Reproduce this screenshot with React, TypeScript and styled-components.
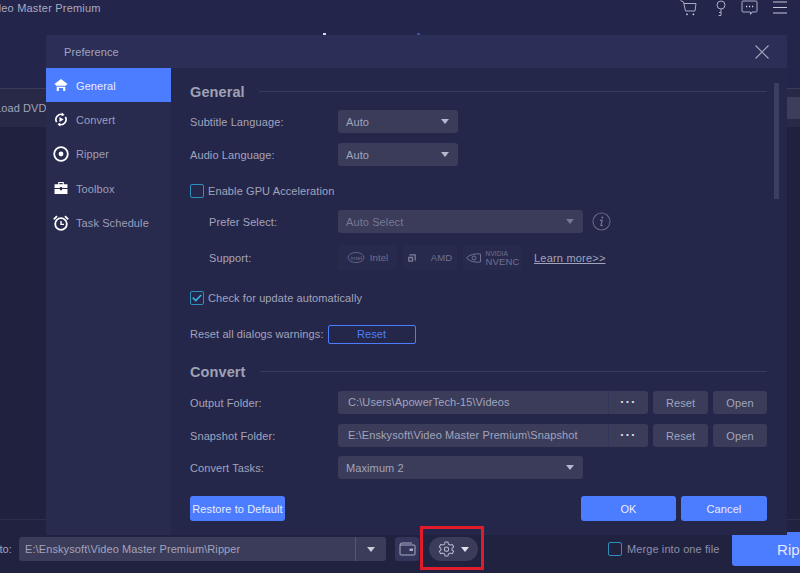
import styled, { createGlobalStyle } from 'styled-components';
import type { ReactNode } from 'react';

const Global = createGlobalStyle`
  html, body { margin: 0; padding: 0; background: #20223f; }
  * { box-sizing: border-box; }
  body { font-family: "Liberation Sans", Arial, sans-serif; }
`;

const navItems: { label: string; icon: ReactNode; active?: boolean }[] = [
  {
    label: 'General',
    active: true,
    icon: (
      <svg width="14" height="12" viewBox="0 0 16 14" fill="#fff">
        <path d="M8 0 L16 6 L14 6.6 L14 8 L2 8 L2 6.6 L0 6 Z" />
        <path d="M3 9 H13 V14 H10.5 V10.5 H5.5 V14 H3 Z" />
      </svg>
    ),
  },
  {
    label: 'Convert',
    icon: (
      <svg width="14" height="15" viewBox="0 0 16 16" fill="none" stroke="#fff" strokeWidth="1.9">
        <path d="M3 11 A6 6 0 0 1 10 2.3" />
        <path d="M13 5 A6 6 0 0 1 6 13.7" />
        <path d="M9 0 L12.2 2.8 L8.6 4.2 Z" fill="#fff" stroke="none" />
        <path d="M7 16 L3.8 13.2 L7.4 11.8 Z" fill="#fff" stroke="none" />
        <path d="M6.2 5.2 L11 8 L6.2 10.8 Z" fill="#fff" stroke="none" />
      </svg>
    ),
  },
  {
    label: 'Ripper',
    icon: (
      <svg width="16" height="16" viewBox="0 0 16 16" fill="none">
        <circle cx="8" cy="8" r="6.8" stroke="#fff" strokeWidth="1.8" />
        <circle cx="8" cy="8" r="2.4" fill="#fff" />
      </svg>
    ),
  },
  {
    label: 'Toolbox',
    icon: (
      <svg width="14" height="12" viewBox="0 0 14 13" fill="#fff">
        <path d="M4 0 H10 V2.5 H14 V6.4 H8.2 V5.4 H5.8 V6.4 H0 V2.5 H4 Z M5.2 1.2 V2.5 H8.8 V1.2 Z" fillRule="evenodd" />
        <path d="M0 7.6 H5.8 V9 H8.2 V7.6 H14 V13 H0 Z" />
      </svg>
    ),
  },
  {
    label: 'Task Schedule',
    icon: (
      <svg width="16" height="16" viewBox="0 0 16 16" fill="none" stroke="#fff">
        <circle cx="8" cy="9" r="5.8" strokeWidth="1.8" />
        <path d="M8 6 V9.4 H11" strokeWidth="1.4" />
        <path d="M0.8 4.4 L4 1.2" strokeWidth="1.8" />
        <path d="M15.2 4.4 L12 1.2" strokeWidth="1.8" />
      </svg>
    ),
  },
];

const App = () => (
  <Page>
    <Global />
    <TopBar>
      <AppTitle>Video Master Premium</AppTitle>
      <TabPeek $left={323} $color="#d8d9e6" />
      <TabPeek $left={417} $color="#3a4fa8" />
      <TopIcons>
        <svg width="17" height="16" viewBox="0 0 17 16" fill="none" stroke="#a9abc4" strokeWidth="1">
          <path d="M0.5 0.5 L3.5 2 L5.5 11 H15 L16 3.5 H4" />
          <circle cx="7" cy="14.3" r="0.9" fill="#d5d6e4" stroke="none" />
          <circle cx="13.4" cy="14.3" r="0.9" fill="#d5d6e4" stroke="none" />
        </svg>
        <svg width="10" height="16" viewBox="0 0 10 16" fill="none" stroke="#a9abc4" strokeWidth="1">
          <circle cx="5" cy="5" r="4" />
          <path d="M5 9 V15.5 H2.5 M5 12.5 H3" />
        </svg>
        <svg width="17" height="16" viewBox="0 0 17 16" fill="none" stroke="#a9abc4" strokeWidth="1">
          <path d="M2 1 H15 Q16 1 16 2 V11 Q16 12 15 12 H11 L9.5 14.5 V12 H2 Q1 12 1 11 V2 Q1 1 2 1 Z" />
          <path d="M5 6.5 H6.2 M8 6.5 H9.2 M11 6.5 H12.2" strokeWidth="1.3" stroke="#d5d6e4" />
        </svg>
        <svg width="14" height="13" viewBox="0 0 14 13" fill="none" stroke="#c5c6d8" strokeWidth="1">
          <path d="M0 1 H14 M0 6.5 H14 M0 12 H14" />
        </svg>
      </TopIcons>
    </TopBar>
    <Toolbar>
      <LoadLabel>Load DVD</LoadLabel>
      <ToolbarStrip />
    </Toolbar>
    <MainArea />
    <BottomBar>
      <SaveLabel>Save to:</SaveLabel>
      <PathField>
        <PathText>E:\Enskysoft\Video Master Premium\Ripper</PathText>
        <PathArrow>
          <Caret $color="#c9cada" />
        </PathArrow>
      </PathField>
      <FolderButton>
        <svg width="17" height="14" viewBox="0 0 17 14" fill="none" stroke="#a9abc4" strokeWidth="1">
          <path d="M1 3 V12 Q1 13 2 13 H15 Q16 13 16 12 V4 Q16 3 15 3 H1 Q1 1 3 1 H13" />
          <rect x="10.5" y="6.5" width="3.5" height="2.5" fill="#a9abc4" stroke="none" />
        </svg>
      </FolderButton>
      <GearPill>
        <svg width="17" height="18" viewBox="0 0 24 24" fill="none" stroke="#b4b5cb" strokeWidth="1.5" strokeLinejoin="round">
          <path d="M10 2 H14 L14.7 5.2 L17 6.5 L20.2 5.5 L22.2 9 L19.8 11 V13.4 L22.2 15.3 L20.2 18.8 L17 17.8 L14.7 19.1 L14 22 H10 L9.3 19.1 L7 17.8 L3.8 18.8 L1.8 15.3 L4.2 13.4 V11 L1.8 9 L3.8 5.5 L7 6.5 L9.3 5.2 Z" />
          <circle cx="12" cy="12.2" r="3" />
        </svg>
        <Caret $color="#e0e1ec" />
      </GearPill>
      <MergeBox>
        <CheckBox />
        <MergeText>Merge into one file</MergeText>
      </MergeBox>
      <RipButton>Rip All</RipButton>
    </BottomBar>

    <Dialog>
      <DialogHeader>
        <DialogTitle>Preference</DialogTitle>
        <svg width="14" height="14" viewBox="0 0 14 14" stroke="#a4a6c0" strokeWidth="1.1">
          <path d="M0.5 0.5 L13.5 13.5 M13.5 0.5 L0.5 13.5" />
        </svg>
      </DialogHeader>
      <DialogBody>
        <Sidebar>
          {navItems.map(({ label, icon, active }) => (
            <NavItem key={label} $active={active}>
              <NavIcon>{icon}</NavIcon>
              <NavLabel>{label}</NavLabel>
            </NavItem>
          ))}
        </Sidebar>
        <Content>
          <SectionTitle>
            <span>General</span>
          </SectionTitle>
          <FormRow $top={9}>
            <FieldLabel>Subtitle Language:</FieldLabel>
            <Select $width={120}>
              Auto
              <Caret />
            </Select>
          </FormRow>
          <FormRow $top={10}>
            <FieldLabel>Audio Language:</FieldLabel>
            <Select $width={120}>
              Auto
              <Caret />
            </Select>
          </FormRow>
          <CheckRow $top={18}>
            <CheckBox />
            Enable GPU Acceleration
          </CheckRow>
          <FormRow $top={12}>
            <SubLabel>Prefer Select:</SubLabel>
            <Select $width={245} $disabled>
              Auto Select
              <Caret $color="#777992" />
            </Select>
            <InfoIcon>
              <svg width="19" height="19" viewBox="0 0 19 19" fill="none">
                <circle cx="9.5" cy="9.5" r="8.5" stroke="#62647f" strokeWidth="1.1" />
                <circle cx="10.3" cy="5.4" r="1" fill="#77799a" />
                <path d="M8 8.4 H10.2 L9 13.2 Q8.9 14.2 10.6 13.2" stroke="#77799a" strokeWidth="1.1" />
              </svg>
            </InfoIcon>
          </FormRow>
          <SupportRow>
            <SubLabel>Support:</SubLabel>
            <Chips>
              <Chip $width={59}>
                <svg width="18" height="13" viewBox="0 0 18 13" fill="none" stroke="#6f7190" strokeWidth="0.8">
                  <ellipse cx="9" cy="6.5" rx="8" ry="5" />
                  <text x="3.6" y="8.6" fontSize="6" fill="#6f7190" stroke="none" fontFamily="Liberation Sans, sans-serif">intel</text>
                </svg>
                Intel
              </Chip>
              <Chip $width={54}>
                <svg width="8" height="8" viewBox="0 0 8 8" fill="none" stroke="#7b7d9a" strokeWidth="1.3">
                  <path d="M1.5 0.8 H7.2 V6.5 M0.8 7.2 V3.5 H4.5 V7.2 Z" />
                </svg>
                <ChipGap />
                AMD
              </Chip>
              <Chip $width={59}>
                <svg width="15" height="10" viewBox="0 0 15 10" fill="none" stroke="#6f7190" strokeWidth="1">
                  <path d="M0.5 5 Q5 0 14.5 1 V9 Q5 10 0.5 5 Z" />
                  <circle cx="8" cy="5" r="2" />
                </svg>
                <NvencText>
                  <small>NVIDIA</small>
                  NVENC
                </NvencText>
              </Chip>
            </Chips>
            <LearnMore>Learn more&gt;&gt;</LearnMore>
          </SupportRow>
          <CheckRow $top={21}>
            <CheckBox $checked>
              <svg width="10" height="8" viewBox="0 0 10 8" fill="none" stroke="#35b3e6" strokeWidth="1.7">
                <path d="M0.8 3.6 L3.8 6.6 L9.2 1" />
              </svg>
            </CheckBox>
            Check for update automatically
          </CheckRow>
          <ResetRow>
            Reset all dialogs warnings:
            <OutlineButton>Reset</OutlineButton>
          </ResetRow>
          <SectionTitle $top={19}>
            <span>Convert</span>
          </SectionTitle>
          <FormRow $top={10}>
            <FieldLabel>Output Folder:</FieldLabel>
            <FolderField>
              <FolderPath>C:\Users\ApowerTech-15\Videos</FolderPath>
              <Dots>···</Dots>
            </FolderField>
            <SmallButton $width={55}>Reset</SmallButton>
            <SmallButton $width={54}>Open</SmallButton>
          </FormRow>
          <FormRow $top={10}>
            <FieldLabel>Snapshot Folder:</FieldLabel>
            <FolderField>
              <FolderPath>E:\Enskysoft\Video Master Premium\Snapshot</FolderPath>
              <Dots>···</Dots>
            </FolderField>
            <SmallButton $width={55}>Reset</SmallButton>
            <SmallButton $width={54}>Open</SmallButton>
          </FormRow>
          <FormRow $top={9}>
            <FieldLabel>Convert Tasks:</FieldLabel>
            <Select $width={245}>
              Maximum 2
              <Caret />
            </Select>
          </FormRow>
          <DialogActions>
            <BlueButton $width={95}>Restore to Default</BlueButton>
            <BlueButton $width={95} $push>OK</BlueButton>
            <BlueButton $width={86}>Cancel</BlueButton>
          </DialogActions>
          <ScrollThumb />
        </Content>
      </DialogBody>
    </Dialog>
    <Highlight />
  </Page>
);

const Page = styled.div`
  position: relative;
  width: 800px;
  height: 573px;
  overflow: hidden;
  display: flex;
  flex-direction: column;
  background: #20223f;
  font-size: 11px;
  letter-spacing: 0.1px;
  color: #a2a4bc;
`;

const TopBar = styled.div`
  position: relative;
  height: 89px;
  flex: none;
  display: flex;
  justify-content: space-between;
  align-items: flex-start;
  background: #23254a;
  border-bottom: 1px solid #3a3c5c;
`;

const TabPeek = styled.span<{ $left: number; $color: string }>`
  position: absolute;
  top: 33px;
  left: ${(props) => props.$left}px;
  width: 3px;
  height: 2px;
  background: ${(props) => props.$color};
`;

const AppTitle = styled.div`
  margin: 0 0 0 -15px;
  font-size: 11px;
  letter-spacing: 0.2px;
  line-height: 16px;
  white-space: nowrap;
  color: #a9abc2;
`;

const TopIcons = styled.div`
  display: flex;
  align-items: center;
  gap: 15px;
  padding: 0 13px 0 0;
  height: 15px;

  svg:first-child {
    margin-right: 4px;
  }
`;

const Toolbar = styled.div`
  height: 38px;
  flex: none;
  display: flex;
  align-items: flex-start;
  justify-content: space-between;
  background: #272947;
`;

const LoadLabel = styled.div`
  margin-left: -5px;
  line-height: 38px;
  white-space: nowrap;
`;

const ToolbarStrip = styled.div`
  width: 13px;
  height: 22px;
  margin-top: 8px;
  background: #3c3e5c;
`;

const MainArea = styled.div`
  flex: 1;
  background: #1f213e;
  border-bottom: 1px solid #2c2e4c;
`;

const BottomBar = styled.div`
  height: 53px;
  flex: none;
  display: flex;
  align-items: flex-start;
  padding-top: 17px;
  background: #20223f;
`;

const SaveLabel = styled.div`
  width: 52px;
  flex: none;
  margin-left: -33px;
  padding-right: 7px;
  text-align: right;
  line-height: 24px;
  white-space: nowrap;
`;

const PathField = styled.div`
  width: 367px;
  height: 24px;
  flex: none;
  display: flex;
  align-items: center;
  justify-content: space-between;
  background: #3a3c5a;
  border-radius: 3px;
`;

const PathText = styled.div`
  padding-left: 6px;
  white-space: nowrap;
`;

const PathArrow = styled.div`
  width: 31px;
  height: 100%;
  display: flex;
  align-items: center;
  justify-content: center;
  border-left: 1px solid #565876;
`;

const FolderButton = styled.div`
  width: 24px;
  height: 24px;
  flex: none;
  margin-left: 9px;
  display: flex;
  align-items: center;
  justify-content: center;
  background: #33355a;
  border-radius: 3px;
`;

const GearPill = styled.div`
  width: 49px;
  height: 24px;
  flex: none;
  margin-left: 10px;
  display: flex;
  align-items: center;
  justify-content: center;
  gap: 6px;
  background: #3a3c5a;
  border-radius: 12px;
`;

const MergeBox = styled.div`
  display: flex;
  flex: none;
  width: 111px;
  align-items: center;
  height: 24px;
  gap: 5px;
  margin-left: 130px;
`;

const MergeText = styled.span`
  white-space: nowrap;
  color: #8e90aa;
`;

const RipButton = styled.div`
  width: 120px;
  height: 34px;
  flex: none;
  margin: -5px 0 0 13px;
  padding-left: 45px;
  display: flex;
  align-items: center;
  font-size: 15px;
  white-space: nowrap;
  color: #e4e8fb;
  background: #4c7cff;
  border-radius: 3px 0 0 3px;
`;

const Dialog = styled.div`
  position: absolute;
  left: 46px;
  top: 35px;
  width: 741px;
  height: 500px;
  display: flex;
  flex-direction: column;
  background: #25274a;
`;

const DialogHeader = styled.div`
  height: 33px;
  flex: none;
  display: flex;
  align-items: center;
  justify-content: space-between;
  padding: 0 18px 0 18px;
  background: #2b2f58;
`;

const DialogTitle = styled.div`
  color: #a2a4bc;
`;

const DialogBody = styled.div`
  flex: 1;
  display: flex;
  min-height: 0;
`;

const Sidebar = styled.div`
  width: 125px;
  flex: none;
  background: #282a4e;
`;

const NavItem = styled.div<{ $active?: boolean }>`
  height: 34.4px;
  display: flex;
  align-items: center;
  color: ${(props) => (props.$active ? '#e8ecff' : '#9d9fb9')};
  background: ${(props) => (props.$active ? '#4c7cff' : 'transparent')};
`;

const NavIcon = styled.div`
  width: 30px;
  flex: none;
  display: flex;
  align-items: center;
  justify-content: center;
`;

const NavLabel = styled.span`
  padding-top: 1px;
`;

const Content = styled.div`
  position: relative;
  flex: 1;
  min-width: 0;
  padding: 15px 20px 0 19px;
`;

const SectionTitle = styled.div<{ $top?: number }>`
  height: 18px;
  margin-top: ${(props) => props.$top ?? 0}px;
  display: flex;
  align-items: center;
  gap: 14px;
  font-size: 14.5px;
  font-weight: 700;
  color: #a0a1b5;

  &::after {
    content: '';
    flex: 1;
    height: 1px;
    margin-top: -1px;
    background: #3a3c5c;
  }
`;

const FormRow = styled.div<{ $top: number }>`
  display: flex;
  align-items: center;
  height: 23px;
  margin-top: ${(props) => props.$top}px;
  gap: 5px;
`;

const FieldLabel = styled.div`
  width: 143px;
  flex: none;
`;

const SubLabel = styled(FieldLabel)`
  padding-left: 19px;
`;

const Select = styled.div<{ $width: number; $disabled?: boolean }>`
  width: ${(props) => props.$width}px;
  height: 23px;
  padding: 0 9px 0 8px;
  flex: none;
  display: flex;
  align-items: center;
  justify-content: space-between;
  border-radius: 3px;
  background: #3a3c5a;
  color: ${(props) => (props.$disabled ? '#777992' : '#a2a4bc')};
`;

const Caret = styled.span<{ $color?: string }>`
  width: 0;
  height: 0;
  border-left: 4.5px solid transparent;
  border-right: 4.5px solid transparent;
  border-top: 5px solid ${(props) => props.$color ?? '#b6b7cc'};
`;

const InfoIcon = styled.div`
  margin-left: 4px;
  display: flex;
`;

const CheckRow = styled.div<{ $top: number }>`
  display: flex;
  align-items: center;
  gap: 4px;
  height: 14px;
  margin-top: ${(props) => props.$top}px;
`;

const CheckBox = styled.span<{ $checked?: boolean }>`
  width: 14px;
  height: 14px;
  flex: none;
  display: flex;
  align-items: center;
  justify-content: center;
  border: 1px solid #2f8fbc;
  border-radius: 2px;
`;

const SupportRow = styled.div`
  display: flex;
  align-items: center;
  gap: 5px;
  height: 25px;
  margin-top: 12px;
`;

const Chips = styled.div`
  display: flex;
  gap: 6px;
`;

const Chip = styled.div<{ $width: number }>`
  width: ${(props) => props.$width}px;
  height: 25px;
  display: flex;
  align-items: center;
  justify-content: center;
  gap: 5px;
  font-size: 9.5px;
  color: #6f7190;
  background: #282a4d;
  border-radius: 2px;
`;

const ChipGap = styled.span`
  width: 5px;
`;

const NvencText = styled.div`
  display: flex;
  flex-direction: column;
  font-size: 9.5px;
  line-height: 9px;

  small {
    font-size: 6.5px;
    line-height: 7px;
  }
`;

const LearnMore = styled.a`
  margin-left: 7px;
  letter-spacing: 0.2px;
  white-space: nowrap;
  text-decoration: underline;
`;

const ResetRow = styled.div`
  display: flex;
  align-items: center;
  gap: 4px;
  height: 20px;
  margin-top: 19px;
  white-space: nowrap;
`;

const OutlineButton = styled.div`
  width: 88px;
  height: 19px;
  display: flex;
  align-items: center;
  justify-content: center;
  color: #4c7cff;
  border: 1px solid #4c7cff;
  border-radius: 2px;
`;

const FolderField = styled.div`
  width: 310px;
  height: 23px;
  flex: none;
  display: flex;
  border-radius: 3px;
  background: #3a3c5a;
`;

const FolderPath = styled.div`
  flex: 1;
  min-width: 0;
  padding-left: 10px;
  line-height: 23px;
  white-space: nowrap;
`;

const Dots = styled.div`
  width: 40px;
  flex: none;
  text-align: center;
  font-size: 12px;
  letter-spacing: 1.5px;
  line-height: 23px;
  font-weight: 700;
  color: #e4e5ee;
  border-left: 1px solid #33355a;
`;

const SmallButton = styled.div<{ $width: number }>`
  width: ${(props) => props.$width}px;
  height: 23px;
  flex: none;
  display: flex;
  align-items: center;
  justify-content: center;
  border-radius: 3px;
  background: #3a3c5a;
`;

const DialogActions = styled.div`
  display: flex;
  gap: 5px;
  margin-top: 17px;
`;

const BlueButton = styled.div<{ $width: number; $push?: boolean }>`
  width: ${(props) => props.$width}px;
  height: 25px;
  margin-left: ${(props) => (props.$push ? 'auto' : '0')};
  display: flex;
  align-items: center;
  justify-content: center;
  border-radius: 3px;
  white-space: nowrap;
  color: #e8ecff;
  background: #4c7cff;
`;

const ScrollThumb = styled.div`
  position: absolute;
  top: 15px;
  right: 8px;
  width: 5px;
  height: 116px;
  background: #3b3e63;
`;

const Highlight = styled.div`
  position: absolute;
  left: 420px;
  top: 526px;
  width: 64px;
  height: 44px;
  border: 3px solid #e01b2a;
`;

export default App;
